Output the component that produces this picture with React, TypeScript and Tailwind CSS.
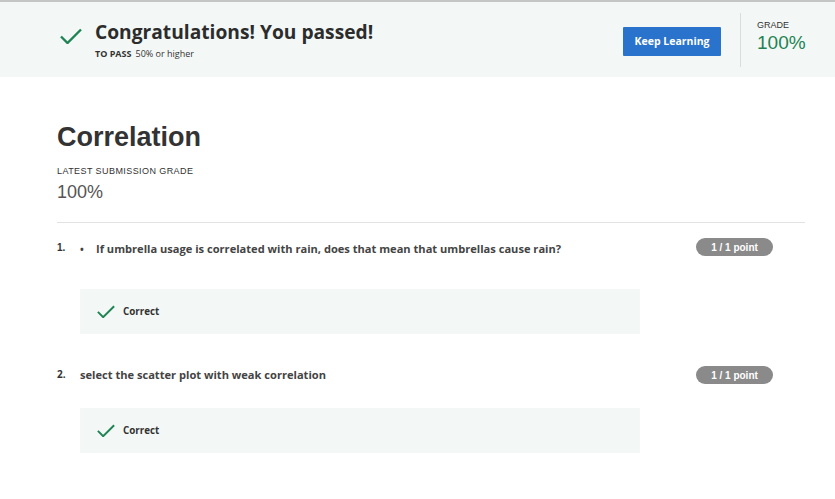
import React from "react";

const Check = ({ className }: { className?: string }) => (
  <svg viewBox="0 0 22 16" className={className} fill="none">
    <path d="M1 8.5 L7.5 15 L21 1.5" stroke="#1f8354" strokeWidth="2.4" />
  </svg>
);

const open = { fontFamily: '"Open Sans", "Liberation Sans", sans-serif' };
const arial = { fontFamily: '"Liberation Sans", Arial, sans-serif' };

function Question({ num, bullet, text }: { num: string; bullet?: boolean; text: string }) {
  return (
    <div className="w-[748px] flex items-start">
      <div className="w-[23px] text-[10px] font-bold text-[#333] leading-[14px]" style={bullet ? arial : open}>
        {num}
      </div>
      <div className="flex-1 flex items-start text-[11.1px] font-bold text-[#444] leading-[14px] pt-[1px]" style={open}>
        {bullet && <span className="w-[16px] text-[10px]">•</span>}
        <span>{text}</span>
      </div>
      <div
        className={
          bullet
            ? "w-[77px] h-[18px] rounded-full bg-[#8a8a8a] text-white text-[10px] font-bold flex items-center justify-center -mt-[3px] mr-[32px]"
            : "w-[77px] h-[18px] rounded-full bg-[#8a8a8a] text-white text-[10px] font-bold flex items-center justify-center -mt-[1px] mr-[32px]"
        }
        style={arial}
      >
        1 / 1 point
      </div>
    </div>
  );
}

function Correct() {
  return (
    <div className="ml-[23px] w-[560px] h-[45px] bg-[#f3f8f6] flex items-center pl-[17px]">
      <Check className="w-[18px] h-[13px]" />
      <span className="ml-[8px] text-[9.8px] font-bold text-[#333] mt-[1px]" style={open}>
        Correct
      </span>
    </div>
  );
}

export default function App() {
  return (
    <div className="w-[835px] h-[499px] bg-white overflow-hidden">
      <div className="border-t-2 border-[#c4c6c5] bg-[#f3f8f6] h-[77px] flex">
        <div className="flex-1 flex items-start pl-[60px] pt-[17px]">
          <Check className="w-[22px] h-[16px] mt-[9px]" />
          <div className="ml-[13px]">
            <div className="text-[19.2px] font-bold text-[#2c2c2c] leading-[26px]" style={open}>
              Congratulations! You passed!
            </div>
            <div className="text-[9px] text-[#333] leading-[12px] mt-[3px]" style={open}>
              <span className="font-bold">TO PASS</span>
              <span className="ml-[4px]">50% or higher</span>
            </div>
          </div>
        </div>
        <div className="flex items-start pt-[25px]">
          <button
            className="w-[98px] h-[29px] bg-[#2a73cc] text-white text-[10.5px] font-bold rounded-[1px]"
            style={open}
          >
            Keep Learning
          </button>
        </div>
        <div className="ml-[19px] mt-[11px] h-[54px] border-l border-[#dcdcdc]" />
        <div className="pl-[16px] pt-[17px] w-[94px]" style={arial}>
          <div className="text-[9px] text-[#333] leading-[12px]">GRADE</div>
          <div className="text-[19px] text-[#1f8354] leading-[22px] mt-[1px]">100%</div>
        </div>
      </div>

      <div className="pl-[57px] pt-[44px]">
        <div className="text-[27px] font-bold text-[#333] leading-[32px]" style={arial}>
          Correlation
        </div>
        <div className="text-[9px] text-[#333] tracking-[0.42px] mt-[12px] leading-[12px]" style={arial}>
          LATEST SUBMISSION GRADE
        </div>
        <div className="text-[18px] text-[#555] leading-[22px] mt-[4px]" style={arial}>
          100%
        </div>
        <div className="mt-[19px] w-[748px] border-t border-[#e2e2e2]" />

        <div className="mt-[18px]">
          <Question
            num="1."
            bullet
            text="If umbrella usage is correlated with rain, does that mean that umbrellas cause rain?"
          />
        </div>
        <div className="mt-[33px]">
          <Correct />
        </div>

        <div className="mt-[33px]">
          <Question num="2." text="select the scatter plot with weak correlation" />
        </div>
        <div className="mt-[24px]">
          <Correct />
        </div>
      </div>
    </div>
  );
}
